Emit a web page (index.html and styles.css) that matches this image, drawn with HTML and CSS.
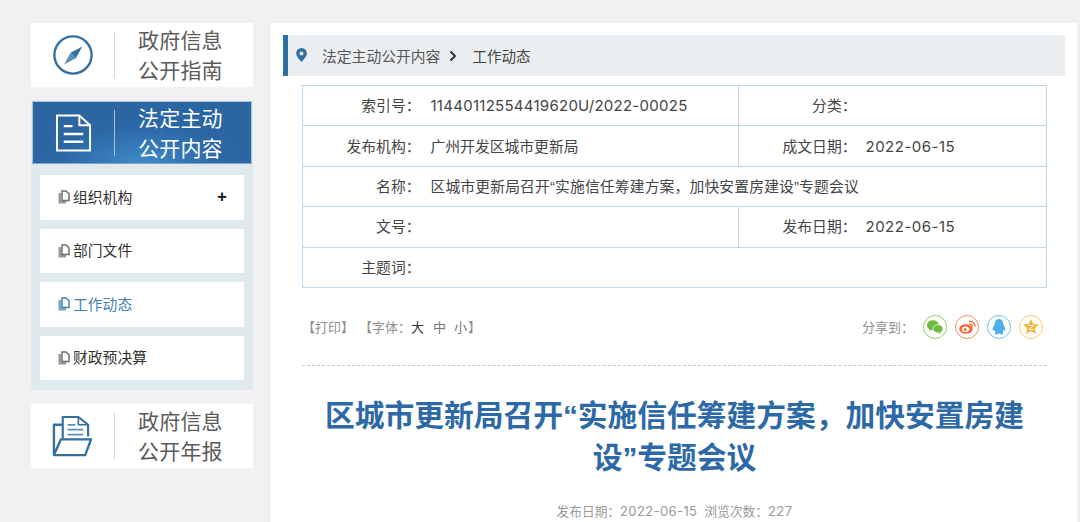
FILE: index.html
```html
<!DOCTYPE html>
<html lang="zh-CN">
<head>
<meta charset="utf-8">
<title>工作动态</title>
<link rel="stylesheet" href="styles.css">
</head>
<body>
<div class="page">
  <aside class="side">
    <a class="card">
      <span class="card-icon">
        <svg width="42" height="42" viewBox="0 0 44 44"><circle cx="22" cy="22" r="19.5" fill="none" stroke="#336f9f" stroke-width="2.5"/><path d="M31.7 13 L25 25.3 L19.4 19.7 Z" fill="#336f9f"/><path d="M12.7 32 L19.4 19.7 L25 25.3 Z" fill="#5b8fb8"/></svg>
      </span>
      <span class="card-text">政府信息<br>公开指南</span>
    </a>
    <div class="menu">
      <div class="card card-active">
        <span class="card-icon">
          <svg width="37" height="40" viewBox="0 0 38 40" fill="none" stroke="#fff" stroke-width="2"><path d="M2 2 H25 L36 12 V38 H2 Z"/><path d="M25 2 V12 H36"/><path d="M9 13 H18 M9 21 H29 M9 29 H29" stroke-width="2.4"/></svg>
        </span>
        <span class="card-text">法定主动<br>公开内容</span>
      </div>
      <ul class="menu-list">
        <li class="menu-item"><svg class="doc" width="12" height="14" viewBox="0 0 12 14"><path d="M.5 3 H3 V11 H8 V13.5 H.5 Z" fill="currentColor" opacity=".7"/><path d="M4 1 H8 L11 3.8 V10.5 H4 Z" fill="none" stroke="currentColor" stroke-width="1.5"/></svg><span>组织机构</span><b class="plus">+</b></li>
        <li class="menu-item"><svg class="doc" width="12" height="14" viewBox="0 0 12 14"><path d="M.5 3 H3 V11 H8 V13.5 H.5 Z" fill="currentColor" opacity=".7"/><path d="M4 1 H8 L11 3.8 V10.5 H4 Z" fill="none" stroke="currentColor" stroke-width="1.5"/></svg><span>部门文件</span></li>
        <li class="menu-item is-current"><svg class="doc" width="12" height="14" viewBox="0 0 12 14"><path d="M.5 3 H3 V11 H8 V13.5 H.5 Z" fill="currentColor" opacity=".7"/><path d="M4 1 H8 L11 3.8 V10.5 H4 Z" fill="none" stroke="currentColor" stroke-width="1.5"/></svg><span>工作动态</span></li>
        <li class="menu-item"><svg class="doc" width="12" height="14" viewBox="0 0 12 14"><path d="M.5 3 H3 V11 H8 V13.5 H.5 Z" fill="currentColor" opacity=".7"/><path d="M4 1 H8 L11 3.8 V10.5 H4 Z" fill="none" stroke="currentColor" stroke-width="1.5"/></svg><span>财政预决算</span></li>
      </ul>
    </div>
    <a class="card">
      <span class="card-icon">
        <svg width="41" height="43" viewBox="0 0 42 44" fill="none" stroke="#336f9f" stroke-width="2.2" stroke-linejoin="round"><path d="M11 24 V2 H27 L37 10 V22"/><path d="M27 2 V10 H37" stroke-width="1.6"/><path d="M16 10 H24 M16 15 H32 M16 20 H32" stroke-width="1.8" stroke="#5b8fb8"/><path d="M11 10 H2 V41 H34 L40 25 H9 L2 41" stroke-width="2.4"/></svg>
      </span>
      <span class="card-text">政府信息<br>公开年报</span>
    </a>
  </aside>
  <main class="main">
    <nav class="crumb">
      <svg class="pin" width="11" height="14" viewBox="0 0 11 14"><path fill-rule="evenodd" d="M5.5 0 A5.3 5.3 0 0 1 10.8 5.3 C10.8 8.5 7.5 11.8 5.5 14 C3.5 11.8 .2 8.5 .2 5.3 A5.3 5.3 0 0 1 5.5 0 Z M5.5 3.4 A2 2 0 1 0 5.5 7.4 A2 2 0 1 0 5.5 3.4 Z" fill="#2e6e9e"/></svg>
      <span class="crumb-a">法定主动公开内容</span>
      <svg class="chev" width="8" height="12" viewBox="0 0 8 12"><path d="M1.5 1.5 L6 6 L1.5 10.5" fill="none" stroke="#333" stroke-width="2"/></svg>
      <span class="crumb-b">工作动态</span>
    </nav>
    <div class="article">
      <table class="meta">
        <colgroup><col class="c1"><col class="c2"><col class="c3"><col></colgroup>
        <tr><th>索引号：</th><td class="num split">11440112554419620U/2022-00025</td><th>分类：</th><td></td></tr>
        <tr><th>发布机构：</th><td class="split">广州开发区城市更新局</td><th>成文日期：</th><td class="num date">2022-06-15</td></tr>
        <tr><th>名称：</th><td class="name" colspan="3">区城市更新局召开“实施信任筹建方案，加快安置房建设”专题会议</td></tr>
        <tr><th>文号：</th><td class="split"></td><th>发布日期：</th><td class="num date">2022-06-15</td></tr>
        <tr><th>主题词：</th><td colspan="3"></td></tr>
      </table>
      <div class="tools">
        <div class="tools-left"><span>【打印】</span><span class="font-size">【字体：<em>大</em><i>中</i><i>小</i>】</span></div>
        <div class="share">
          <span class="share-label">分享到：</span>
          <span class="share-icon wx"><svg width="16" height="14" viewBox="0 0 16 14"><ellipse cx="6" cy="5.2" rx="6" ry="5" fill="#6cbb3f"/><path d="M2.5 8 L2 11 L5 9.5Z" fill="#6cbb3f"/><ellipse cx="11" cy="8.8" rx="5" ry="4.2" fill="#6cbb3f" stroke="#fff" stroke-width=".8"/><path d="M13 12 L14 14 L11 13Z" fill="#6cbb3f"/></svg></span>
          <span class="share-icon wb"><svg width="17" height="14" viewBox="0 0 17 14"><ellipse cx="7" cy="9" rx="6.8" ry="4.8" fill="#f4683a"/><ellipse cx="6.6" cy="9.3" rx="3.6" ry="2.8" fill="#fff"/><circle cx="6.2" cy="9.5" r="1.5" fill="#f4683a"/><path d="M10 1.5 A5 5 0 0 1 16 6.5 M10.5 4 A2.6 2.6 0 0 1 13.5 6.5" fill="none" stroke="#f4683a" stroke-width="1.3"/></svg></span>
          <span class="share-icon qq"><svg width="14" height="16" viewBox="0 0 14 16"><path d="M7 0 C10 0 11.2 2.4 11.2 5 C12.5 7 14 10 13 11.5 C12.5 12 12 11.5 11.5 10.8 C11.5 12 11 13 10.5 13.5 C11.5 14 11.5 15.5 9.5 15.5 C8.5 15.5 7.5 15 7 14.6 C6.5 15 5.5 15.5 4.5 15.5 C2.5 15.5 2.5 14 3.5 13.5 C3 13 2.5 12 2.5 10.8 C2 11.5 1.5 12 1 11.5 C0 10 1.5 7 2.8 5 C2.8 2.4 4 0 7 0Z" fill="#4db0e8"/></svg></span>
          <span class="share-icon qz"><svg width="16" height="15" viewBox="0 0 16 15"><path d="M8 0 L10.3 5 L16 5.6 L11.8 9.3 L13 15 L8 12.1 L3 15 L4.2 9.3 L0 5.6 L5.7 5Z" fill="#f9b233"/><path d="M5.5 6.5 H10.5 L5.8 10.5 H10.5" fill="none" stroke="#fff" stroke-width="1"/></svg></span>
        </div>
      </div>
      <h1 class="title">区城市更新局召开“实施信任筹建方案，加快安置房建设”专题会议</h1>
      <p class="info">发布日期：<span class="info-date">2022-06-15</span>&nbsp;&nbsp;浏览次数：<span class="info-date">227</span></p>
    </div>
  </main>
</div>
</body>
</html>
```
FILE: styles.css
```css
* { box-sizing: border-box; }
html, body { margin: 0; padding: 0; height: 522px; overflow: hidden; }
body {
  background: #f1f1f1;
  font-family: "Liberation Sans", "Noto Sans CJK SC", sans-serif;
  color: #333;
}
.page { display: flex; align-items: flex-start; padding: 23px 3px 0 31px; gap: 18px; }
.side { width: 222px; flex: none; display: flex; flex-direction: column; gap: 14px; }
.card {
  height: 64px; background: #fff; display: flex; align-items: center;
  position: relative;
}
.card-icon { width: 84px; flex: none; display: flex; justify-content: center; align-items: center; border-right: 1px solid #d5d5d5; height: 46px; }
.card-text { padding: 2px 0 0 23px; font-size: 21px; line-height: 30px; color: #5a5a5a; letter-spacing: .2px; white-space: nowrap; }
.menu { background: #e0eaed; height: 289px; }
.card-active {
  height: 63px; margin-left: 1px; margin-right: 1px; background: radial-gradient(ellipse 110px 50px at 50% 100%, #3f89c9 0%, #2c67a5 75%, #2b65a2 100%);
  border: 1px solid #a9c3da; border-bottom-color: #7fa6c9;
}
.card-active .card-icon { border-right-color: #a8bfd6; width: 82px; height: 46px; }
.card-active .card-text { color: #fff; padding-left: 23px; }
.menu-list { list-style: none; margin: 0; padding: 11px 9px 0; display: flex; flex-direction: column; gap: 9px; }
.menu-item {
  height: 44.5px; background: #fff; display: flex; align-items: center;
  padding: 0 17px 0 18px; font-size: 14.8px; color: #333; position: relative;
}
.menu-item span { margin-left: 3px; line-height: 20px; padding-top: 1px; }
.menu-item .doc { color: #6e6e6e; flex: none; }
.is-current, .is-current .doc { color: #3f7fb2; }
.plus { margin-left: auto; font-size: 17px; line-height: 20px; color: #111; font-weight: 700; }
.main { flex: 1; height: 499px; background: #fff; padding: 12px 12px 0; }
.crumb {
  height: 41px; background: #ebeef1; border-left: 5px solid #2f6f9f;
  display: flex; align-items: center; font-size: 14.8px; color: #555;
}
.pin { margin-left: 8px; position: relative; top: -1px; }
.crumb-a { margin-left: 15px; }
.chev { margin: 0 15px 0 9px; }
.crumb-b { color: #444; font-size: 14.5px; }
.article { padding: 9px 18px 0 19px; }
.meta {
  width: 745px; height: 203px; border-collapse: collapse; table-layout: fixed;
  font-size: 14.8px; color: #444; border: 1px solid #bcd8ec;
}
.meta .c1 { width: 119px; }
.meta .c2 { width: 317px; }
.meta .c3 { width: 118px; }
.meta tr { border-bottom: 1px solid #bcd8ec; }
.meta th, .meta td { height: 40.4px; padding: 0 0 2px; font-weight: 400; }
.meta th { text-align: right; }
.meta th:first-child { padding-right: 1px; }
.meta td { padding-left: 9px; white-space: nowrap; }
.meta .split { border-right: 1px solid #bcd8ec; }
.meta .num { padding-bottom: 0; font-family: Inter, "Noto Sans CJK SC", sans-serif; font-size: 15px; letter-spacing: .27px; }
.meta .date { letter-spacing: .5px; }
.meta .name { letter-spacing: .14px; }
.tools { display: flex; justify-content: space-between; align-items: center; height: 78px; border-bottom: 1px dashed #c8c8c8; padding: 0 4px 0 0; font-size: 13px; color: #8f8f8f; }
.tools-left { display: flex; gap: 5px; padding-bottom: 1px; }
.font-size em { font-style: normal; color: #333; margin-right: 9px; }
.font-size i { font-style: normal; margin-right: 8px; color: #777; }
.font-size i:last-child { margin-right: 1px; }
.share { display: flex; align-items: center; gap: 8px; }
.share-label { margin-right: 1px; color: #8f8f8f; }
.share-icon { width: 24px; height: 24px; border-radius: 50%; border: 1px solid; display: flex; align-items: center; justify-content: center; }
.wx { border-color: #8ed069; }
.wb { border-color: #f98a62; }
.qq { border-color: #6fc0ee; }
.qz { border-color: #fbc96c; }
.title { margin: 29px 0 0; text-align: center; font-size: 29.75px; line-height: 42px; color: #2d69a6; font-weight: 700; padding: 0 16px; }
.info { margin: 23px 0 0; text-align: center; font-size: 12.7px; line-height: 18px; color: #999; font-family: Inter, "Noto Sans CJK SC", sans-serif; }
.info-date { font-size: 13px; letter-spacing: .4px; }
```
